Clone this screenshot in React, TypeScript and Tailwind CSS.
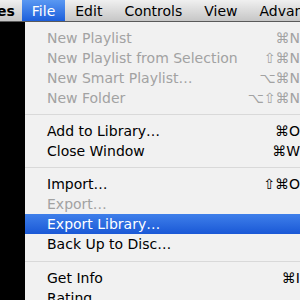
import React from 'react';

type Item =
  | { kind: 'item'; label: string; keys?: string; disabled?: boolean; active?: boolean }
  | { kind: 'sep'; h?: string };

const items: Item[] = [
  { kind: 'item', label: 'New Playlist', keys: '⌘N', disabled: true },
  { kind: 'item', label: 'New Playlist from Selection', keys: '⇧⌘N', disabled: true },
  { kind: 'item', label: 'New Smart Playlist…', keys: '⌥⌘N', disabled: true },
  { kind: 'item', label: 'New Folder', keys: '⌥⇧⌘N', disabled: true },
  { kind: 'sep', h: 'h-[13px]' },
  { kind: 'item', label: 'Add to Library…', keys: '⌘O' },
  { kind: 'item', label: 'Close Window', keys: '⌘W' },
  { kind: 'sep', h: 'h-[13px]' },
  { kind: 'item', label: 'Import…', keys: '⇧⌘O' },
  { kind: 'item', label: 'Export…', disabled: true },
  { kind: 'item', label: 'Export Library…', active: true },
  { kind: 'item', label: 'Back Up to Disc…' },
  { kind: 'sep', h: 'h-[14px]' },
  { kind: 'item', label: 'Get Info', keys: '⌘I' },
  { kind: 'item', label: 'Rating' },
];

const menus = [
  { label: 'es', cls: '-ml-[3px] pr-[7px] font-bold' },
  { label: 'File', cls: 'px-[10px] text-white bg-gradient-to-b from-[#5a98f2] to-[#1c5edb]' },
  { label: 'Edit', cls: 'pl-[10px] pr-[11px]' },
  { label: 'Controls', cls: 'px-[11px]' },
  { label: 'View', cls: 'px-[11px]' },
  { label: 'Advanced', cls: 'px-[11px]' },
];

export default function App() {
  return (
    <div className="w-[300px] h-[300px] overflow-hidden bg-black flex flex-col font-['DejaVu_Sans',sans-serif]">
      {/* ── Menu bar ── */}
      <div className="h-[22px] shrink-0 flex items-stretch bg-gradient-to-b from-[#f0f0f0] to-[#c6c6c6] border-b border-[#5a5a5a] text-[14px] text-black whitespace-nowrap">
        {menus.map(m => (
          <div key={m.label} className={`shrink-0 flex items-center leading-none ${m.cls}`}>
            {m.label}
          </div>
        ))}
      </div>

      {/* ── File menu ── */}
      <div className="flex-1 flex min-h-0">
        <div className="w-[25px] shrink-0 bg-black" />
        <div className="w-[289px] shrink-0 bg-[#f1f1f1] pt-[6px] text-[14px] whitespace-nowrap">
          {items.map((it, i) =>
            it.kind === 'sep' ? (
              <div key={i} className={`${it.h} flex items-center`}>
                <div className="w-full h-px bg-[#d9d9d9]" />
              </div>
            ) : (
              <div
                key={i}
                className={`h-[20px] flex items-center justify-between pl-[22px] pr-[14px] leading-none ${
                  it.active
                    ? 'text-white bg-gradient-to-b from-[#3f7fea] to-[#1a58d6]'
                    : it.disabled
                    ? 'text-[#a2a2a2]'
                    : 'text-black'
                }`}
              >
                <span>{it.label}</span>
                {it.keys && <span>{it.keys}</span>}
              </div>
            )
          )}
        </div>
      </div>
    </div>
  );
}
